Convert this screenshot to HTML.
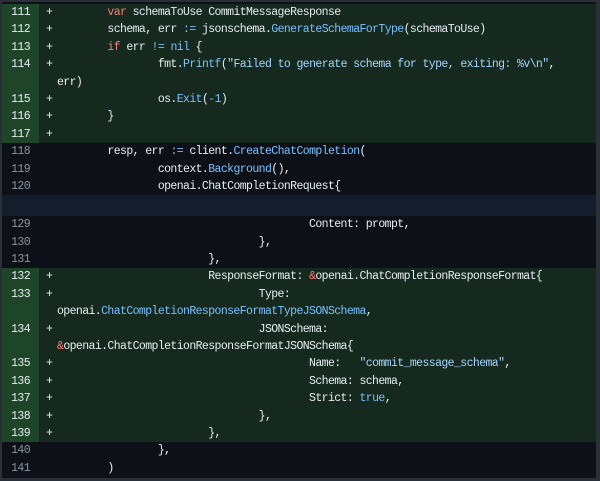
<!DOCTYPE html><html><head><style>
body{margin:0;width:600px;height:481px;background:#2b3038;overflow:hidden}
#c{position:absolute;left:2px;top:2px;width:594px;height:476px;background:#0d1117;overflow:hidden;padding-top:2px;box-sizing:border-box}
.r{position:relative;height:17.4px;line-height:17.4px;font:11.5px/17.4px "Liberation Mono",monospace;letter-spacing:-0.6px;color:#e6edf3;white-space:pre;tab-size:8}
.n{position:absolute;left:0;width:28px;text-align:right;color:#8b949e;z-index:1}
.p{position:absolute;left:44px}
.t{position:absolute;left:55px}
.a{background:#16291e}
.a .n{color:#e6edf3}
.a:before{content:"";position:absolute;left:0;top:0;bottom:0;width:37px;background:#1f4529;z-index:0}
.k{color:#ff7b72}.f{color:#79c0ff}.s{color:#a5d6ff}
.x{height:21px;background:#131d2c}
</style></head><body><div id="c">
<div class="r a"><span class="n">111</span><span class="p">+</span><span class="t">	<span class="k">var</span> schemaToUse CommitMessageResponse</span></div>
<div class="r a"><span class="n">112</span><span class="p">+</span><span class="t">	schema, err <span class="f">:=</span> jsonschema.<span class="f">GenerateSchemaForType</span>(schemaToUse)</span></div>
<div class="r a"><span class="n">113</span><span class="p">+</span><span class="t">	<span class="k">if</span> err <span class="f">!=</span> <span class="f">nil</span> {</span></div>
<div class="r a"><span class="n">114</span><span class="p">+</span><span class="t">		fmt.<span class="f">Printf</span>(<span class="s">"Failed to generate schema for type, exiting: %v\n"</span>,</span></div>
<div class="r a"><span class="t">err)</span></div>
<div class="r a"><span class="n">115</span><span class="p">+</span><span class="t">		os.<span class="f">Exit</span>(<span class="f">-1</span>)</span></div>
<div class="r a"><span class="n">116</span><span class="p">+</span><span class="t">	}</span></div>
<div class="r a"><span class="n">117</span><span class="p">+</span></div>
<div class="r"><span class="n">118</span><span class="t">	resp, err <span class="f">:=</span> client.<span class="f">CreateChatCompletion</span>(</span></div>
<div class="r"><span class="n">119</span><span class="t">		context.<span class="f">Background</span>(),</span></div>
<div class="r"><span class="n">120</span><span class="t">		openai.ChatCompletionRequest{</span></div>
<div class="x"></div>
<div class="r"><span class="n">129</span><span class="t">					Content: prompt,</span></div>
<div class="r"><span class="n">130</span><span class="t">				},</span></div>
<div class="r"><span class="n">131</span><span class="t">			},</span></div>
<div class="r a"><span class="n">132</span><span class="p">+</span><span class="t">			ResponseFormat: <span class="k">&amp;</span>openai.ChatCompletionResponseFormat{</span></div>
<div class="r a"><span class="n">133</span><span class="p">+</span><span class="t">				Type:</span></div>
<div class="r a"><span class="t">openai.<span class="f">ChatCompletionResponseFormatTypeJSONSchema</span>,</span></div>
<div class="r a"><span class="n">134</span><span class="p">+</span><span class="t">				JSONSchema:</span></div>
<div class="r a"><span class="t"><span class="k">&amp;</span>openai.ChatCompletionResponseFormatJSONSchema{</span></div>
<div class="r a"><span class="n">135</span><span class="p">+</span><span class="t">					Name:   <span class="s">"commit_message_schema"</span>,</span></div>
<div class="r a"><span class="n">136</span><span class="p">+</span><span class="t">					Schema: schema,</span></div>
<div class="r a"><span class="n">137</span><span class="p">+</span><span class="t">					Strict: <span class="f">true</span>,</span></div>
<div class="r a"><span class="n">138</span><span class="p">+</span><span class="t">				},</span></div>
<div class="r a"><span class="n">139</span><span class="p">+</span><span class="t">			},</span></div>
<div class="r"><span class="n">140</span><span class="t">		},</span></div>
<div class="r"><span class="n">141</span><span class="t">	)</span></div>
</div></body></html>
